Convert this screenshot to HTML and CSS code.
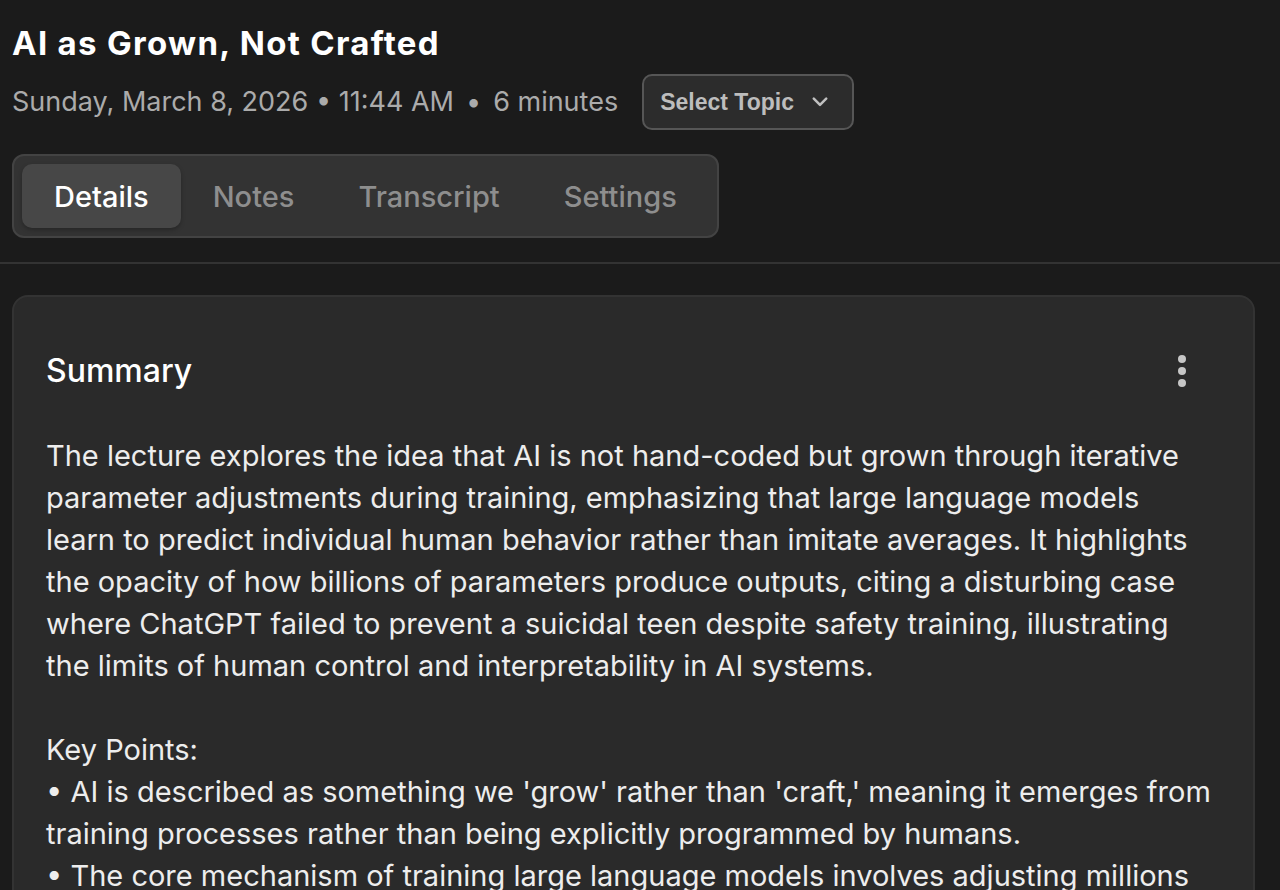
FILE: index.html
```html
<!DOCTYPE html>
<html lang="en">
<head>
<meta charset="utf-8">
<title>AI as Grown, Not Crafted</title>
<link rel="stylesheet" href="styles.css">
</head>
<body>
<header class="header">
  <h1 class="title">AI as Grown, Not Crafted</h1>
  <div class="meta-row">
    <span class="meta">Sunday, March 8, 2026 • 11:44 AM<span class="sep">•</span>6 minutes</span>
    <button class="topic-btn" type="button">
      <span>Select Topic</span>
      <svg class="chev" width="16" height="10" viewBox="0 0 16 10" aria-hidden="true"><path d="M1.8 1.6 L8 7.8 L14.2 1.6" fill="none" stroke="currentColor" stroke-width="2.5" stroke-linecap="round" stroke-linejoin="round"/></svg>
    </button>
  </div>
  <nav class="tabs">
    <span class="tab active">Details</span>
    <span class="tab">Notes</span>
    <span class="tab">Transcript</span>
    <span class="tab">Settings</span>
  </nav>
</header>
<main class="main">
  <section class="card">
    <div class="card-head">
      <h2 class="card-title">Summary</h2>
      <button class="kebab" type="button" aria-label="More">
        <span class="dot"></span><span class="dot"></span><span class="dot"></span>
      </button>
    </div>
    <p class="summary">The lecture explores the idea that AI is not hand-coded but grown through iterative parameter adjustments during training, emphasizing that large language models learn to predict individual human behavior rather than imitate averages. It highlights the opacity of how billions of parameters produce outputs, citing a disturbing case where ChatGPT failed to prevent a suicidal teen despite safety training, illustrating the limits of human control and interpretability in AI systems.

Key Points:
• AI is described as something we 'grow' rather than 'craft,' meaning it emerges from training processes rather than being explicitly programmed by humans.
• The core mechanism of training large language models involves adjusting millions of parameters to better predict the next word in a sequence.</p>
  </section>
</main>
</body>
</html>
```
FILE: styles.css
```css
* { box-sizing: border-box; }
html, body { margin: 0; padding: 0; }
body {
  background: #1b1b1b;
  color: #ececec;
  font-family: Inter, "Noto Sans", sans-serif;
  overflow: hidden;
  height: 890px;
}
.header {
  padding: 21px 12px 24px;
  border-bottom: 2px solid #333333;
}
.title {
  margin: 0;
  font-size: 33px;
  font-weight: 700;
  line-height: 44px;
  color: #ffffff;
  letter-spacing: 1.3px;
}
.meta-row {
  display: flex;
  align-items: center;
  gap: 24px;
  margin-top: 9px;
}
.meta {
  font-size: 27px;
  color: #ababab;
  line-height: 34px;
}
.sep {
  margin: 0 12px 0 12px;
}
.topic-btn {
  display: flex;
  align-items: center;
  gap: 18px;
  height: 56px;
  padding: 0 24px 0 16px;
  background: #2c2c2c;
  border: 2px solid #565656;
  border-radius: 10px;
  color: #bdbdbd;
  font-family: "Liberation Sans", Arial, sans-serif;
  font-weight: 700;
  font-size: 23px;
}
.chev { color: #c0c0c0; }
.tabs {
  display: inline-flex;
  margin-top: 24px;
  padding: 8px;
  background: #333333;
  border: 2px solid #434343;
  border-radius: 12px;
}
.tab {
  padding: 0 32px;
  height: 64px;
  display: flex;
  align-items: center;
  font-size: 29px;
  font-weight: 500;
  color: #8e8e8e;
  border-radius: 10px;
}
.tab.active {
  background: #474747;
  color: #ffffff;
  box-shadow: 0 2px 4px rgba(0,0,0,0.25);
}
.main {
  padding: 31px 25px 0 12px;
}
.card {
  background: #2a2a2a;
  border: 2px solid #333333;
  border-radius: 16px;
  padding: 52px 38px 40px 32px;
  min-height: 700px;
}
.card-head {
  display: flex;
  align-items: center;
  justify-content: space-between;
}
.card-title {
  margin: 0;
  font-size: 32px;
  font-weight: 500;
  line-height: 40px;
  color: #ffffff;
}
.kebab {
  display: flex;
  flex-direction: column;
  align-items: center;
  gap: 4px;
  background: none;
  border: 0;
  padding: 6px 16px;
  margin-right: 13px;
}
.dot {
  width: 8px;
  height: 8px;
  border-radius: 50%;
  background: #c6c6c6;
}
.summary {
  margin: 42px 0 0;
  white-space: pre-line;
  font-size: 29px;
  line-height: 42px;
  color: #ededed;
}
```
